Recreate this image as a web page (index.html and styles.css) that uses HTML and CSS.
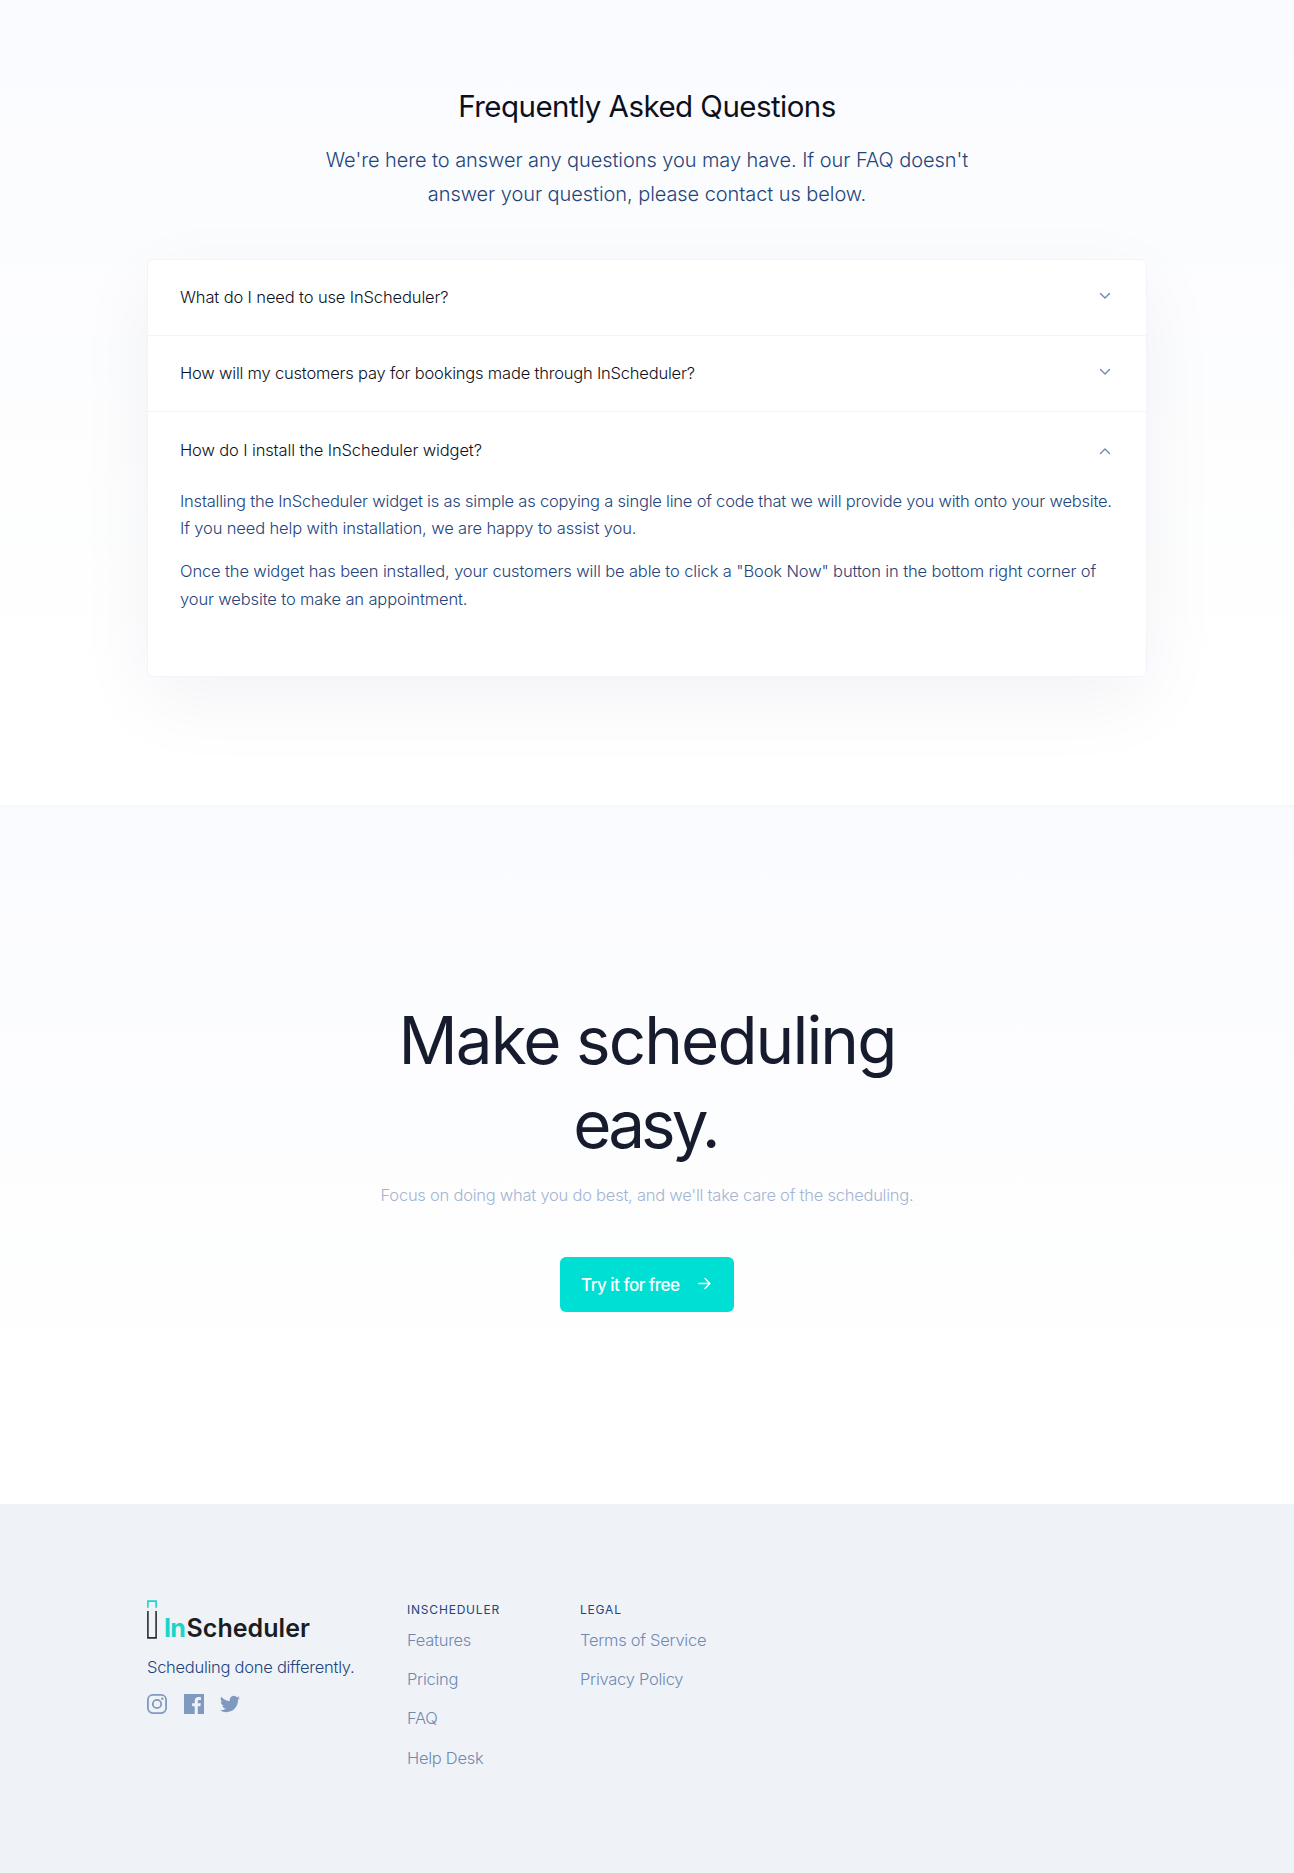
FILE: index.html
```html
<!DOCTYPE html>
<html lang="en">
<head>
<meta charset="utf-8">
<title>InScheduler</title>
<link rel="stylesheet" href="styles.css">
</head>
<body>
<section class="faq">
  <h2 class="faq-title">Frequently Asked Questions</h2>
  <p class="faq-lead">We're here to answer any questions you may have. If our FAQ doesn't<br>answer your question, please contact us below.</p>
  <div class="card">
    <div class="item">
      <div class="question"><span class="q1">What do I need to use InScheduler?</span>
        <svg class="chevron" viewBox="0 0 12 8"><path d="M1.5 1.5 6 6l4.5-4.5"/></svg></div>
    </div>
    <div class="item">
      <div class="question"><span class="q2">How will my customers pay for bookings made through InScheduler?</span>
        <svg class="chevron" viewBox="0 0 12 8"><path d="M1.5 1.5 6 6l4.5-4.5"/></svg></div>
    </div>
    <div class="item open">
      <div class="question"><span class="q1">How do I install the InScheduler widget?</span>
        <svg class="chevron" viewBox="0 0 12 8"><path d="M1.5 6.5 6 2l4.5 4.5"/></svg></div>
      <div class="answer">
        <p>Installing the InScheduler widget is as simple as copying a single line of code that we will provide you with onto your website.<br><span class="looser">If you need help with installation, we are happy to assist you.</span></p>
        <p class="looser">Once the widget has been installed, your customers will be able to click a "Book Now" button in the bottom right corner of<br>your website to make an appointment.</p>
      </div>
    </div>
  </div>
</section>
<section class="cta">
  <h1 class="cta-title">Make scheduling<br><span class="cta-easy">easy.</span></h1>
  <p class="cta-lead">Focus on doing what you do best, and we'll take care of the scheduling.</p>
  <a class="button"><span>Try it for free</span>
    <svg class="arrow" viewBox="0 0 13 13"><path d="M.8 6.5h11M7 1.6l4.9 4.9L7 11.4"/></svg></a>
</section>
<footer class="footer">
  <div class="brand">
    <div class="logo">
      <svg class="logo-mark" viewBox="0 0 10 39"><path class="mark-top" d="M.9 7.8V1.1h8.2v6.7"/><path class="mark-body" d="M.9 11v26.9h8.2V11"/></svg>
      <div class="wordmark"><span class="in">In</span><span class="scheduler">Scheduler</span></div>
    </div>
    <p class="tagline">Scheduling done differently.</p>
    <div class="social">
      <svg viewBox="0 0 20 20"><rect x=".9" y=".9" width="18.2" height="18.2" rx="5" fill="none" stroke="currentColor" stroke-width="1.8"/><circle cx="10" cy="10" r="4.2" fill="none" stroke="currentColor" stroke-width="1.8"/><circle cx="15.3" cy="4.7" r="1.2"/></svg>
      <svg viewBox="0 0 20 20"><path d="M0 0h20v20h-6.2v-7.7h2.6l.4-3h-3V7.4c0-.9.2-1.5 1.5-1.5h1.6V3.2c-.3 0-1.2-.1-2.3-.1-2.3 0-3.9 1.4-3.9 4v2.2H8.1v3h2.6V20H0z"/></svg>
      <svg viewBox="0 0 24 24"><path d="M23.95 4.57a10 10 0 0 1-2.82.77 4.96 4.96 0 0 0 2.16-2.72c-.95.55-2 .95-3.13 1.18a4.92 4.92 0 0 0-8.38 4.48C7.69 8.1 4.07 6.13 1.64 3.16a4.92 4.92 0 0 0 1.52 6.57 4.9 4.9 0 0 1-2.23-.61v.06c0 2.39 1.7 4.38 3.95 4.83a5 5 0 0 1-2.21.08 4.94 4.94 0 0 0 4.6 3.42A9.87 9.87 0 0 1 0 19.54a14 14 0 0 0 7.56 2.21c9.05 0 14-7.5 14-13.98 0-.21 0-.42-.02-.63a9.94 9.94 0 0 0 2.46-2.55z"/></svg>
    </div>
  </div>
  <nav class="links">
    <h6>INSCHEDULER</h6>
    <a>Features</a><a>Pricing</a><a>FAQ</a><a>Help Desk</a>
  </nav>
  <nav class="links">
    <h6>LEGAL</h6>
    <a>Terms of Service</a><a>Privacy Policy</a>
  </nav>
</footer>
</body>
</html>
```
FILE: styles.css
```css
* { box-sizing: border-box; margin: 0; padding: 0; }
body {
  font: 300 16.5px/27.2px Inter, "Liberation Sans", sans-serif;
  letter-spacing: -0.21px;
  color: #24447b;
  background: #fff;
}
svg { display: block; flex: none; }

.faq {
  height: 807px;
  padding: 86px 147px 0;
  border-bottom: 2px solid #f5f7fa;
  background: linear-gradient(#fafbfe, #fff 705px);
  text-align: center;
}
.faq-title { font-size: 29.5px; line-height: 40px; font-weight: 400; letter-spacing: -0.54px; color: #0d101c; }
.faq-lead { margin-top: 18px; font-size: 20px; line-height: 33.6px; letter-spacing: -0.07px; }
.card {
  margin-top: 47.8px;
  border: 1px solid #f1f4f8;
  border-radius: 6px;
  background: #fff;
  box-shadow: 0 24px 80px rgba(22, 28, 80, 0.05);
  text-align: left;
}
.item { padding: 24px 32px 25px; border-bottom: 1px solid #f1f4f8; }
.item.open { padding: 25px 32px 63px; border-bottom: 0; }
.question { display: flex; justify-content: space-between; line-height: 26px; color: #0d1120; }
.q1 { letter-spacing: -0.13px; }
.q2 { letter-spacing: -0.2px; }
.chevron { width: 12px; height: 8px; margin: 8px 3px 0 0; fill: none; stroke: #6f88b3; stroke-width: 1.4; stroke-linecap: round; stroke-linejoin: round; }
.open .chevron { margin-top: 10px; }
.answer { margin-top: 25px; white-space: nowrap; }
.answer p + p { margin-top: 16px; }
.looser { letter-spacing: -0.13px; }

.cta {
  display: flex;
  flex-direction: column;
  align-items: center;
  height: 697px;
  padding-top: 192px;
  background: linear-gradient(#fafbfe, #fff 600px);
  text-align: center;
}
.cta-title { font-size: 65.5px; line-height: 83.6px; font-weight: 400; letter-spacing: -1.9px; color: #161c2d; }
.cta-easy { margin-right: 4px; letter-spacing: -3.9px; }
.cta-lead { margin-top: 16px; color: #a3b5d3; letter-spacing: -0.24px; }
.button {
  display: flex;
  align-items: center;
  gap: 19px;
  width: 174px;
  height: 55px;
  margin-top: 48px;
  padding: 2px 0 0 21px;
  border-radius: 6px;
  background: #00dfd3;
  color: #fff;
  font-size: 17px;
  font-weight: 500;
  letter-spacing: -0.5px;
  white-space: nowrap;
}
.arrow { width: 13px; height: 13px; margin-top: -4px; fill: none; stroke: #fff; stroke-width: 1.4; stroke-linecap: round; stroke-linejoin: round; }

.footer {
  display: grid;
  grid-template-columns: 260px 173px 1fr;
  height: 369px;
  padding: 96px 147px 0;
  background: #eff3f8;
}
.logo { display: flex; gap: 7px; height: 39px; }
.logo-mark { width: 10px; height: 39px; fill: none; stroke-width: 1.6; }
.mark-top { stroke: #19d5c9; }
.mark-body { stroke: #2b2d33; }
.wordmark { display: flex; padding-top: 12px; font-size: 25px; line-height: 32px; font-weight: 600; color: #1b1d23; }
.in { width: 22.5px; letter-spacing: -0.8px; font-weight: 700; color: #19d5c9; }
.scheduler { letter-spacing: 0.05px; }
.tagline { margin-top: 15px; letter-spacing: -0.27px; }
.social { display: flex; gap: 16.5px; margin-top: 13px; color: #8099bf; }
.social svg { width: 20px; height: 20px; fill: currentColor; }
.links { display: flex; flex-direction: column; gap: 11.9px; color: #7089b3; letter-spacing: -0.27px; }
.links h6 { margin: 1px 0 -3.6px; font-size: 12px; line-height: 18px; font-weight: 400; letter-spacing: 0.8px; color: #24447b; }
```
